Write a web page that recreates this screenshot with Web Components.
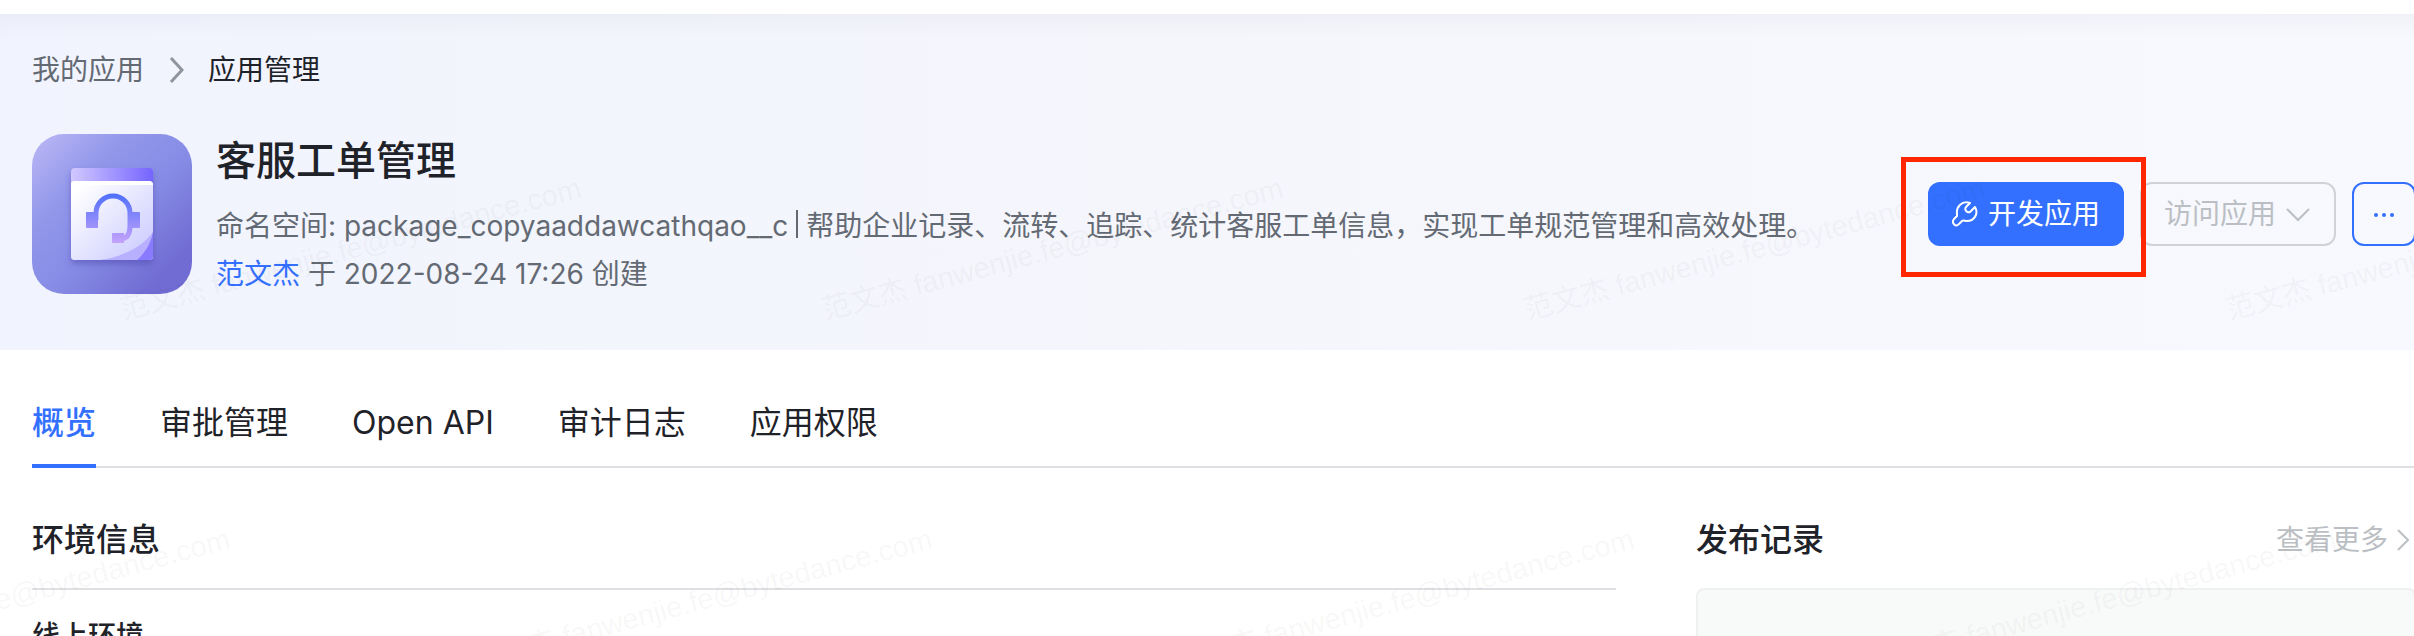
<!DOCTYPE html>
<html lang="zh-CN">
<head>
<meta charset="utf-8">
<title>应用管理</title>
<style>
  body {
    margin: 0;
    overflow: hidden;
    background: #fff;
    color: #1f2329;
    font-family: Inter, "Noto Sans CJK SC", sans-serif;
    font-size: 28px;
    line-height: 44px;
  }
</style>
</head>
<body>
<app-page></app-page>

<script>
  function define(name, html) {
    customElements.define(name, class extends HTMLElement {
      constructor() {
        super();
        this.attachShadow({ mode: "open" }).innerHTML = html;
      }
    });
  }

  define("app-breadcrumb", `
    <style>
      :host { display: block; }
      nav { display: flex; align-items: center; gap: 24px; }
      a { color: #646a73; text-decoration: none; }
      svg { width: 16px; height: 28px; }
    </style>
    <nav aria-label="breadcrumb">
      <a href="#">我的应用</a>
      <svg viewBox="0 0 16 28" fill="none" stroke="#8f959e" stroke-width="3"><path d="M3 2l11 12L3 26"/></svg>
      <span>应用管理</span>
    </nav>
  `);

  define("app-logo", `
    <style>
      :host { display: block; flex: none; }
      svg { display: block; width: 160px; height: 160px; }
    </style>
    <svg viewBox="0 0 160 160" aria-hidden="true">
      <defs>
        <linearGradient id="bg" x1="0" y1="0" x2="1" y2="1">
          <stop offset="0" stop-color="#bdb8f6"/>
          <stop offset=".3" stop-color="#9297ea"/>
          <stop offset=".55" stop-color="#868ce5"/>
          <stop offset=".85" stop-color="#716cd3"/>
          <stop offset="1" stop-color="#716cd3"/>
        </linearGradient>
        <linearGradient id="top">
          <stop offset="0" stop-color="#d1c8ff"/>
          <stop offset="1" stop-color="#7565ff"/>
        </linearGradient>
        <linearGradient id="paper" x1="0" y1="0" x2="1" y2="1">
          <stop offset=".1" stop-color="#fff"/>
          <stop offset=".8" stop-color="#d3d3ff"/>
        </linearGradient>
        <linearGradient id="phone" gradientUnits="userSpaceOnUse" x1="0" y1="60" x2="0" y2="110">
          <stop offset="0" stop-color="#4f70fb"/>
          <stop offset="1" stop-color="#c7a4fb"/>
        </linearGradient>
        <clipPath id="sheet"><rect x="39" y="47" width="82" height="79" rx="4"/></clipPath>
        <filter id="shadow" x="-20%" y="-20%" width="140%" height="150%">
          <feDropShadow dx="0" dy="4" stdDeviation="3" flood-color="#4a3fa8" flood-opacity=".5"/>
        </filter>
      </defs>
      <rect width="160" height="160" rx="32" fill="url(#bg)"/>
      <rect x="39" y="34" width="82" height="92" rx="4" fill="url(#top)" filter="url(#shadow)"/>
      <g clip-path="url(#sheet)">
        <rect x="39" y="47" width="82" height="79" fill="url(#paper)"/>
        <rect x="39" y="47" width="82" height="4" fill="#fff"/>
        <path d="M68 126C92 123 112 111 121 98V126Z" fill="#b8b0ff"/>
        <path d="M105 126C113 119 119 109 121 98V126Z" fill="#897bff"/>
      </g>
      <path d="M64 86V79a17 17 0 0 1 34 0v13q0 13-10 13" fill="none" stroke="url(#phone)" stroke-width="5"/>
      <path d="M55 78h11v16H55a1 1 0 0 1-1-1V79a1 1 0 0 1 1-1ZM96 78h11a1 1 0 0 1 1 1v14a1 1 0 0 1-1 1H96ZM81 99h11v10H81a1 1 0 0 1-1-1v-8a1 1 0 0 1 1-1Z" fill="url(#phone)"/>
    </svg>
  `);

  define("app-info", `
    <style>
      :host { display: block; flex: 1; min-width: 0; }
      h1 { margin: 0 0 16px; font-size: 40px; font-weight: 500; line-height: 54px; }
      p { margin: 0 0 4px; color: #646a73; white-space: nowrap; }
      a { color: #3370ff; text-decoration: none; }
      i { display: inline-block; width: 2px; height: 28px; margin: 0 8px; background: #646a73; vertical-align: -2px; }
    </style>
    <h1>客服工单管理</h1>
    <p>命名空间: package_copyaaddawcathqao__c<i></i>帮助企业记录、流转、追踪、统计客服工单信息，实现工单规范管理和高效处理。</p>
    <p><a href="#">范文杰</a> 于 2022-08-24 17:26 创建</p>
  `);

  define("app-button", `
    <style>
      :host { display: block; flex: none; }
      button {
        display: flex;
        align-items: center;
        justify-content: center;
        gap: 8px;
        box-sizing: border-box;
        width: 100%;
        height: 64px;
        padding: 0 24px;
        border: 2px solid #3370ff;
        border-radius: 12px;
        background: none;
        color: #3370ff;
        font: inherit;
        white-space: nowrap;
      }
      :host([primary]) button { background: #3370ff; color: #fff; }
      :host([muted]) button { border-color: #d0d3d6; color: #bbbfc4; }
      :host([square]) button { padding: 0; }
    </style>
    <button type="button"><slot></slot></button>
  `);

  define("app-actions", `
    <style>
      :host { display: flex; align-items: center; gap: 16px; }
      svg { display: block; flex: none; }
      .marked { position: relative; }
      .marked::after {
        content: "";
        position: absolute;
        inset: -25px -22px -31px -27px;
        z-index: 2;
        border: 5px solid #ff2600;
        pointer-events: none;
      }
      app-button { width: 196px; }
      app-button[square] { width: 64px; }
    </style>
    <div class="marked">
      <app-button primary>
        <svg width="28" height="28" viewBox="0 0 28 28" fill="none" stroke="currentColor" stroke-width="2" stroke-linejoin="round"><path d="M18 3C10 0 4 7 5 14v2l-3 3c-3 4 2 9 5 5l3-3c1-1 3 0 5 0C22 21 27 14 23 7l-5 5c-3 1-6-2-4-5z"/></svg>
        开发应用
      </app-button>
    </div>
    <app-button muted>
      访问应用
      <svg width="28" height="28" viewBox="0 0 28 28" fill="none" stroke="currentColor" stroke-width="2"><path d="M3 9l11 11L25 9"/></svg>
    </app-button>
    <app-button square aria-label="更多">
      <svg width="20" height="6" viewBox="0 0 20 6" fill="currentColor"><circle cx="2" cy="4" r="2"/><circle cx="10" cy="4" r="2"/><circle cx="18" cy="4" r="2"/></svg>
    </app-button>
  `);

  define("app-header", `
    <style>
      :host {
        display: block;
        box-sizing: border-box;
        height: 336px;
        padding: 34px 32px 0;
        background: linear-gradient(90deg, #f1f4fe, #f5f6fc 45%, #f8f9fe);
        box-shadow: inset 0 24px 24px -16px rgba(31, 35, 41, .04);
      }
      .row { display: flex; align-items: flex-start; gap: 24px; margin-top: 42px; }
      app-actions { margin-top: 48px; }
    </style>
    <app-breadcrumb></app-breadcrumb>
    <div class="row">
      <app-logo></app-logo>
      <app-info></app-info>
      <app-actions></app-actions>
    </div>
  `);

  define("app-tabs", `
    <style>
      :host { display: block; margin: 0 32px; border-bottom: 2px solid #dee0e3; }
      nav { display: flex; gap: 64px; margin-bottom: -2px; }
      a {
        padding: 50px 0 18px;
        border-bottom: 4px solid transparent;
        color: inherit;
        font-size: 32px;
        line-height: 46px;
        text-decoration: none;
      }
      .active { border-color: #3370ff; color: #3370ff; font-weight: 500; }
    </style>
    <nav>
      <a class="active" href="#">概览</a>
      <a href="#">审批管理</a>
      <a href="#">Open API</a>
      <a href="#">审计日志</a>
      <a href="#">应用权限</a>
    </nav>
  `);

  define("app-section", `
    <style>
      :host { display: block; min-width: 0; }
      header { display: flex; align-items: center; justify-content: space-between; height: 48px; margin-bottom: 24px; }
      h2 { margin: 0; font-size: 32px; font-weight: 500; line-height: 48px; }
    </style>
    <header><h2><slot name="title"></slot></h2><slot name="extra"></slot></header>
    <slot></slot>
  `);

  define("app-watermark", `
    <style>
      :host { position: absolute; inset: 0; overflow: hidden; pointer-events: none; }
      svg { display: block; width: 100%; height: 100%; }
      text { fill: #1f2329; fill-opacity: .05; font-family: "Liberation Sans", "Noto Sans CJK SC", sans-serif; font-size: 29px; }
    </style>
    <svg></svg>
  `);

  define("app-page", `
    <style>
      :host { display: block; position: relative; overflow: hidden; height: 100vh; }
      /* the console is a little wider than the window and runs off its right side */
      .content { margin-right: -34px; padding-top: 14px; }
      .panels { display: grid; grid-template-columns: minmax(0, 11fr) minmax(0, 5fr); gap: 80px; padding: 48px 32px 0; }
      h3 { margin: 0; padding-top: 24px; border-top: 2px solid #dee0e3; font-size: 28px; font-weight: 500; line-height: 44px; }
      .more { display: flex; align-items: center; gap: 8px; margin-right: 6px; color: #bbbfc4; text-decoration: none; }
      .record { box-sizing: border-box; height: 240px; border: 2px solid #eff0f1; border-radius: 8px; background: #f8faf9; }
    </style>
    <div class="content">
      <app-header></app-header>
      <app-tabs></app-tabs>
      <div class="panels">
        <app-section>
          <span slot="title">环境信息</span>
          <h3>线上环境</h3>
        </app-section>
        <app-section>
          <span slot="title">发布记录</span>
          <a class="more" slot="extra" href="#">查看更多<svg width="14" height="24" viewBox="0 0 14 24" fill="none" stroke="currentColor" stroke-width="2"><path d="M2 2l10 10L2 22"/></svg></a>
          <div class="record"></div>
        </app-section>
      </div>
    </div>
    <app-watermark></app-watermark>
  `);

  // staggered watermark, every other row shifted by half a step
  const STEP = 702;
  const svg = document.querySelector("app-page").shadowRoot
    .querySelector("app-watermark").shadowRoot.querySelector("svg");
  for (let row = 0; row < 2; row++) {
    for (let x = 123 - row * STEP / 2; x < 2500; x += STEP) {
      const text = document.createElementNS("http://www.w3.org/2000/svg", "text");
      text.setAttribute("transform", `translate(${x} ${320 + row * 351}) rotate(-15)`);
      text.textContent = "范文杰 fanwenjie.fe@bytedance.com";
      svg.appendChild(text);
    }
  }
</script>
</body>
</html>
